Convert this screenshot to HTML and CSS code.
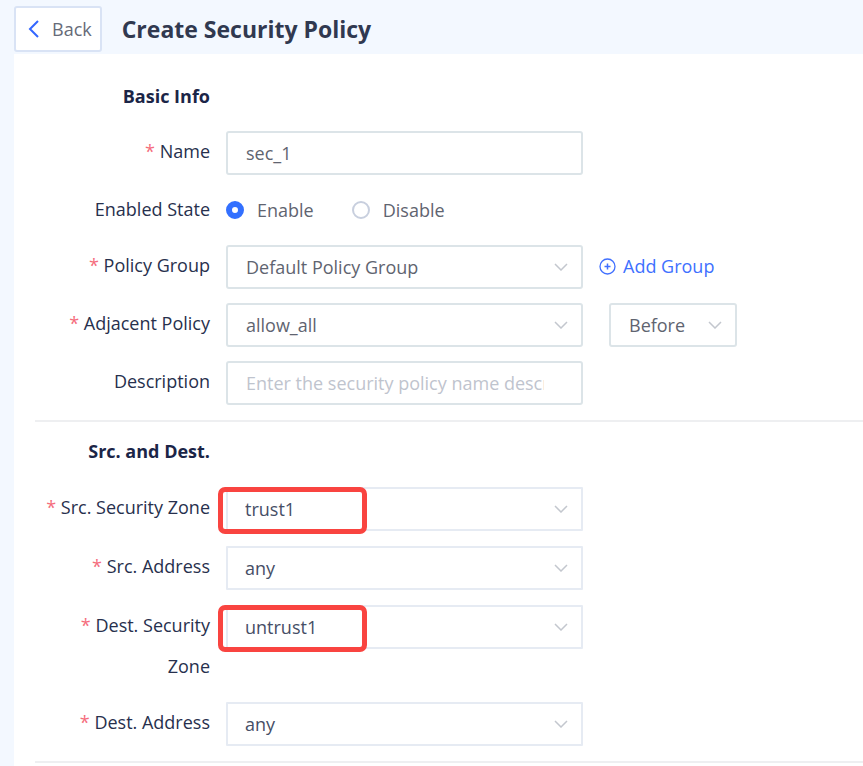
FILE: index.html
```html
<!DOCTYPE html>
<html lang="en">
  <head>
    <meta charset="UTF-8" />
    <meta name="viewport" content="width=device-width, initial-scale=1.0" />
    <title>Create Security Policy</title>
    <link rel="stylesheet" href="styles.css">
  </head>
  <body>
    <header class="page-header">
      <button type="button" class="back-btn">
        <svg width="11" height="18" viewBox="0 0 11 18" fill="none" stroke="#3366ff" stroke-width="2" aria-hidden="true">
          <path d="M10 1 2 9l8 8" />
        </svg>
        Back
      </button>
      <h1>Create Security Policy</h1>
    </header>

    <form class="panel">
      <section class="section basic">
        <h2>Basic Info</h2>
        <div class="row">
          <label for="name"><span class="required">*</span> Name</label>
          <input type="text" id="name" class="control" value="sec_1" required />
        </div>
        <div class="row radio-row" role="radiogroup" aria-labelledby="state-label">
          <span class="label" id="state-label">Enabled State</span>
          <div class="radios">
            <label class="radio"><input type="radio" name="state" checked /> Enable</label>
            <label class="radio"><input type="radio" name="state" /> Disable</label>
          </div>
        </div>
        <div class="row">
          <label for="group"><span class="required">*</span> Policy Group</label>
          <select id="group" class="control">
            <option>Default Policy Group</option>
          </select>
          <a href="#" class="add-group">
            <svg width="17" height="17" viewBox="0 0 17 17" fill="none" stroke="currentColor" aria-hidden="true">
              <circle cx="8.5" cy="8.5" r="7.5" stroke-width="1.3" />
              <path d="M5.5 8.5h6M8.5 5.5v6" stroke-width="1.5" />
            </svg>
            Add Group
          </a>
        </div>
        <div class="row">
          <label for="adjacent"><span class="required">*</span> Adjacent Policy</label>
          <select id="adjacent" class="control">
            <option>allow_all</option>
          </select>
          <select class="control position" aria-label="Position">
            <option>Before</option>
            <option>After</option>
          </select>
        </div>
        <div class="row">
          <label for="description">Description</label>
          <input type="text" id="description" class="control" placeholder="Enter the security policy name description" />
        </div>
      </section>

      <section class="section addresses">
        <h2>Src. and Dest.</h2>
        <div class="row">
          <label for="src-zone"><span class="required">*</span> Src. Security Zone</label>
          <div class="marked">
            <select id="src-zone" class="control">
              <option>trust1</option>
            </select>
            <span class="mark"></span>
          </div>
        </div>
        <div class="row">
          <label for="src-address"><span class="required">*</span> Src. Address</label>
          <select id="src-address" class="control">
            <option>any</option>
          </select>
        </div>
        <div class="row">
          <label for="dest-zone"><span class="required">*</span> Dest. Security Zone</label>
          <div class="marked">
            <select id="dest-zone" class="control">
              <option>untrust1</option>
            </select>
            <span class="mark"></span>
          </div>
        </div>
        <div class="row">
          <label for="dest-address"><span class="required">*</span> Dest. Address</label>
          <select id="dest-address" class="control">
            <option>any</option>
          </select>
        </div>
      </section>
    </form>
  </body>
</html>
```
FILE: styles.css
```css
* {
  box-sizing: border-box;
}
body {
  margin: 0;
  min-height: 100vh;
  display: flex;
  flex-direction: column;
  background-color: #f3f8ff;
  color: #27304d;
  font-family: "Open Sans", "Noto Sans", sans-serif;
  font-size: 18px;
}
input,
select,
button {
  font: inherit;
}

/* header */
.page-header {
  display: flex;
  align-items: center;
  gap: 20px;
  padding: 6px 14px 2px;
}
.back-btn {
  display: flex;
  align-items: center;
  gap: 13px;
  height: 46px;
  padding: 0 8px 0 12px;
  border: 2px solid #d9e3f5;
  border-radius: 3px;
  background-color: white;
  color: #666b78;
  cursor: pointer;
}
h1 {
  margin: 0;
  font-size: 23px;
  line-height: 44px;
  color: #303950;
}

/* form */
.panel {
  flex: 1;
  margin-left: 14px;
  padding-left: 21px;
  background-color: white;
}
.section {
  display: flex;
  flex-direction: column;
  gap: 15px;
  padding: 9px 0 15px;
  border-bottom: 2px solid #eeeff1;
}
.basic {
  gap: 14px;
  padding-top: 22px;
}
h2 {
  width: 175px;
  margin: 0;
  font-size: 18px;
  line-height: 41px;
  text-align: right;
  color: #1b2547;
}
.row {
  display: grid;
  grid-template-columns: 175px minmax(0, 357px) auto;
  column-gap: 16px;
  justify-content: start;
  align-items: start;
}
.row > label,
.label {
  line-height: 41px;
  text-align: right;
}
.required {
  color: #f56c7c;
}
.control {
  width: 100%;
  height: 44px;
  padding: 0 37px 0 18px;
  border: 2px solid #dce4e8;
  border-radius: 3px;
  background-color: white;
  color: #5f6470;
}
.control::placeholder {
  color: #bfc4ce;
}
select.control {
  appearance: none;
  background-image: url("data:image/svg+xml,%3Csvg xmlns='http://www.w3.org/2000/svg' width='14' height='8' fill='none' stroke='%23c3c7ce' stroke-width='1.5'%3E%3Cpath d='M1 1l6 6 6-6'/%3E%3C/svg%3E");
  background-repeat: no-repeat;
  background-position: right 13px center;
}
.addresses .control {
  padding-left: 17px;
  border-color: #e6ebf3;
  border-radius: 1px;
  color: #464e66;
}
.position {
  width: 128px;
  margin-left: 10px;
}

/* radios */
.radios {
  display: flex;
  gap: 38px;
}
.radio {
  display: flex;
  align-items: center;
  gap: 13px;
  line-height: 42px;
  color: #5f6470;
}
.radio input {
  appearance: none;
  width: 18px;
  height: 18px;
  margin: 0;
  border: 2px solid #c8cfde;
  border-radius: 50%;
  background-color: white;
}
.radio input:checked {
  border: 6px solid #3370ff;
}

.add-group {
  display: flex;
  align-items: center;
  gap: 7px;
  line-height: 42px;
  color: #4070ff;
  text-decoration: none;
}

/* red frame over the selected zone */
.marked {
  position: relative;
}
.mark {
  position: absolute;
  top: 0;
  left: -8px;
  width: 149px;
  height: 47px;
  border: 5px solid #f94440;
  border-radius: 7px;
  pointer-events: none;
}
```
